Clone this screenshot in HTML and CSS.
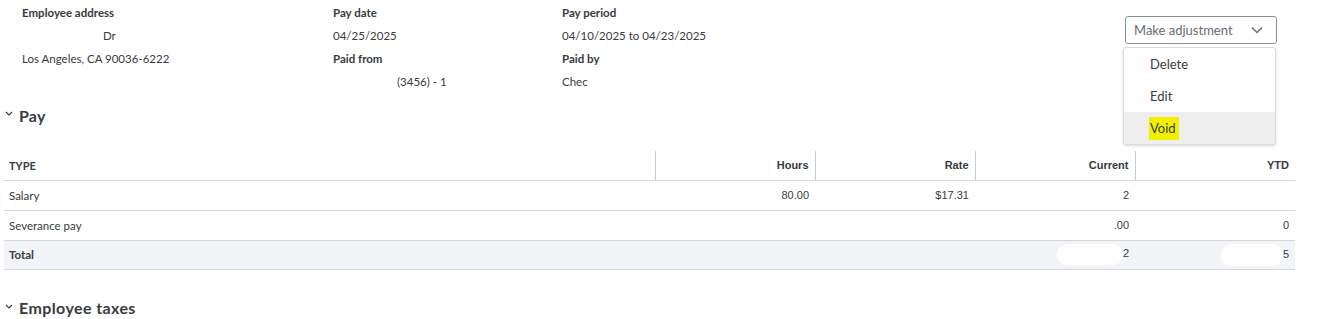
FILE: index.html
```html
<!DOCTYPE html>
<html>
<head>
<meta charset="utf-8">
<link rel="stylesheet" href="styles.css">
</head>
<body>
<div class="top">
  <div class="info">
    <div class="lbl">Employee address</div>
    <div class="lbl">Pay date</div>
    <div class="lbl">Pay period</div>
    <div class="val redacted-a">Dr</div>
    <div class="val">04/25/2025</div>
    <div class="val">04/10/2025 to 04/23/2025</div>
    <div class="val">Los Angeles, CA 90036-6222</div>
    <div class="lbl">Paid from</div>
    <div class="lbl">Paid by</div>
    <div></div>
    <div class="val redacted-b">(3456) - 1</div>
    <div class="val">Chec</div>
  </div>
  <div class="actions">
    <div class="select">
      <span>Make adjustment</span>
      <svg class="chev" width="12" height="8" viewBox="0 0 12 8"><polyline points="1,1.5 6,6.5 11,1.5" fill="none" stroke="#6b6c72" stroke-width="1.5"/></svg>
    </div>
    <ul class="menu">
      <li>Delete</li>
      <li>Edit</li>
      <li class="hover"><span class="hl">Void</span></li>
    </ul>
  </div>
</div>

<h2 class="section"><svg class="caret" width="8" height="5" viewBox="0 0 8 5"><polyline points="1,1 4,4 7,1" fill="none" stroke="#393a3d" stroke-width="1.1"/></svg>Pay</h2>

<table class="pay">
  <thead>
    <tr>
      <th class="type">TYPE</th>
      <th class="num">Hours</th>
      <th class="num">Rate</th>
      <th class="num">Current</th>
      <th class="num">YTD</th>
    </tr>
  </thead>
  <tbody>
    <tr>
      <td class="type">Salary</td>
      <td class="num">80.00</td>
      <td class="num">$17.31</td>
      <td class="num">2</td>
      <td class="num"></td>
    </tr>
    <tr>
      <td class="type">Severance pay</td>
      <td class="num"></td>
      <td class="num"></td>
      <td class="num">.00</td>
      <td class="num">0</td>
    </tr>
    <tr class="total">
      <td class="type">Total</td>
      <td class="num"></td>
      <td class="num"></td>
      <td class="num"><span class="blob b1"></span>2</td>
      <td class="num"><span class="blob b2"></span>5</td>
    </tr>
  </tbody>
</table>

<h2 class="section taxes"><svg class="caret" width="8" height="5" viewBox="0 0 8 5"><polyline points="1,1 4,4 7,1" fill="none" stroke="#393a3d" stroke-width="1.1"/></svg>Employee taxes</h2>
</body>
</html>
```

FILE: styles.css
```css
html, body {
  margin: 0;
  padding: 0;
  background: #fff;
}
body {
  font-family: Lato, "Open Sans", sans-serif;
  color: #393a3d;
  width: 1323px;
  height: 319px;
  overflow: hidden;
}
.top {
  position: relative;
  display: flex;
  height: 96px;
}
.info {
  display: grid;
  grid-template-columns: 311px 229px 300px;
  grid-auto-rows: 23px;
  padding-left: 22px;
  padding-top: 1px;
  font-size: 11.5px;
  line-height: 23px;
}
.lbl {
  font-weight: 700;
  color: #393a3d;
}
.val {
  color: #393a3d;
}
.redacted-a {
  padding-left: 81px;
}
.redacted-b {
  padding-left: 64px;
}
.actions {
  position: absolute;
  left: 1123px;
  top: 16px;
  width: 154px;
}
.select {
  margin-left: 2px;
  box-sizing: border-box;
  width: 152px;
  height: 28px;
  border: 1px solid #8d9096;
  border-radius: 3px;
  display: flex;
  align-items: center;
  justify-content: space-between;
  padding: 0 13px 0 8px;
  font-size: 13px;
  color: #6b6c72;
}
.chev {
  display: block;
}
.menu {
  list-style: none;
  margin: 3px 0 0 0;
  padding: 0;
  box-sizing: border-box;
  width: 153px;
  height: 98px;
  border: 1px solid #dcdcdc;
  border-radius: 3px;
  box-shadow: 0 1px 3px rgba(0,0,0,0.15);
  background: #fff;
  font-size: 13px;
  color: #393a3d;
  overflow: hidden;
}
.menu li {
  height: 32px;
  line-height: 32px;
  padding-left: 26px;
}
.menu li.hover {
  background: #eeeeee;
}
.hl {
  background: #f0f000;
  padding: 3px 3px 4px 1px;
  margin-left: -1px;
}
.section {
  margin: 0;
  display: flex;
  align-items: center;
  height: 24px;
  margin-top: 7px;
  font-size: 16px;
  font-weight: 700;
  color: #393a3d;
  padding-left: 5px;
  letter-spacing: 0.2px;
}
.caret {
  margin-right: 6px;
  margin-top: -3px;
}
.pay {
  margin: 24px 0 0 4px;
  width: 1291px;
  border-collapse: collapse;
  font-size: 11px;
}
.pay th, .pay td {
  height: 30px;
  padding: 0 6px 0 5px;
  border-bottom: 1px solid #d4d7dc;
  box-sizing: border-box;
}
.pay th {
  height: 29px;
  font-family: "Liberation Sans", Arial, sans-serif;
  font-weight: 700;
  font-size: 11px;
  color: #393a3d;
}
.pay th.type {
  font-family: Lato, sans-serif;
  text-align: left;
  width: 651px;
}
.pay th.num {
  width: 160px;
  text-align: right;
  border-left: 1px solid #c9cbcf;
}
.pay td.type {
  text-align: left;
  font-size: 11.5px;
}
.pay td.num {
  text-align: right;
  font-family: "Liberation Sans", Arial, sans-serif;
}
.pay tr.total td {
  height: 29px;
  background: #f3f4f8;
}
.pay tr.total td.type {
  font-weight: 700;
}
.blob {
  display: inline-block;
  vertical-align: middle;
  background: #fff;
  border-radius: 10px;
}
.b1 {
  width: 66px;
  height: 21px;
}
.b2 {
  width: 62px;
  height: 22px;
}
.taxes {
  margin-top: 26px;
  letter-spacing: 0.4px;
}
```
